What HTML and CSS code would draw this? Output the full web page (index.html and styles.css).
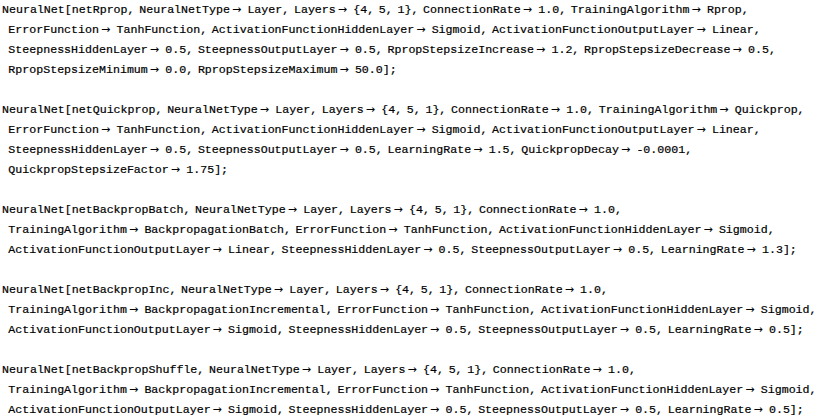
FILE: index.html
```html
<!DOCTYPE html>
<html lang="en">
<head>
<meta charset="utf-8">
<title>NeuralNet definitions</title>
<link rel="stylesheet" href="styles.css">
</head>
<body>
<main class="code">
  <div class="stmt">
    <div class="line">NeuralNet[netRprop, NeuralNetType<span class="a">→</span> Layer, Layers<span class="a">→</span> {4, 5, 1}, ConnectionRate<span class="a">→</span> 1.0, TrainingAlgorithm<span class="a">→</span> Rprop,</div>
    <div class="line cont">ErrorFunction<span class="a">→</span> TanhFunction, ActivationFunctionHiddenLayer<span class="a">→</span> Sigmoid, ActivationFunctionOutputLayer<span class="a">→</span> Linear,</div>
    <div class="line cont">SteepnessHiddenLayer<span class="a">→</span> 0.5, SteepnessOutputLayer<span class="a">→</span> 0.5, RpropStepsizeIncrease<span class="a">→</span> 1.2, RpropStepsizeDecrease<span class="a">→</span> 0.5,</div>
    <div class="line cont">RpropStepsizeMinimum<span class="a">→</span> 0.0, RpropStepsizeMaximum<span class="a">→</span> 50.0];</div>
  </div>
  <div class="stmt">
    <div class="line">NeuralNet[netQuickprop, NeuralNetType<span class="a">→</span> Layer, Layers<span class="a">→</span> {4, 5, 1}, ConnectionRate<span class="a">→</span> 1.0, TrainingAlgorithm<span class="a">→</span> Quickprop,</div>
    <div class="line cont">ErrorFunction<span class="a">→</span> TanhFunction, ActivationFunctionHiddenLayer<span class="a">→</span> Sigmoid, ActivationFunctionOutputLayer<span class="a">→</span> Linear,</div>
    <div class="line cont">SteepnessHiddenLayer<span class="a">→</span> 0.5, SteepnessOutputLayer<span class="a">→</span> 0.5, LearningRate<span class="a">→</span> 1.5, QuickpropDecay<span class="a">→</span> -0.0001,</div>
    <div class="line cont">QuickpropStepsizeFactor<span class="a">→</span> 1.75];</div>
  </div>
  <div class="stmt">
    <div class="line">NeuralNet[netBackpropBatch, NeuralNetType<span class="a">→</span> Layer, Layers<span class="a">→</span> {4, 5, 1}, ConnectionRate<span class="a">→</span> 1.0,</div>
    <div class="line cont">TrainingAlgorithm<span class="a">→</span> BackpropagationBatch, ErrorFunction<span class="a">→</span> TanhFunction, ActivationFunctionHiddenLayer<span class="a">→</span> Sigmoid,</div>
    <div class="line cont">ActivationFunctionOutputLayer<span class="a">→</span> Linear, SteepnessHiddenLayer<span class="a">→</span> 0.5, SteepnessOutputLayer<span class="a">→</span> 0.5, LearningRate<span class="a">→</span> 1.3];</div>
  </div>
  <div class="stmt">
    <div class="line">NeuralNet[netBackpropInc, NeuralNetType<span class="a">→</span> Layer, Layers<span class="a">→</span> {4, 5, 1}, ConnectionRate<span class="a">→</span> 1.0,</div>
    <div class="line cont">TrainingAlgorithm<span class="a">→</span> BackpropagationIncremental, ErrorFunction<span class="a">→</span> TanhFunction, ActivationFunctionHiddenLayer<span class="a">→</span> Sigmoid,</div>
    <div class="line cont">ActivationFunctionOutputLayer<span class="a">→</span> Sigmoid, SteepnessHiddenLayer<span class="a">→</span> 0.5, SteepnessOutputLayer<span class="a">→</span> 0.5, LearningRate<span class="a">→</span> 0.5];</div>
  </div>
  <div class="stmt">
    <div class="line">NeuralNet[netBackpropShuffle, NeuralNetType<span class="a">→</span> Layer, Layers<span class="a">→</span> {4, 5, 1}, ConnectionRate<span class="a">→</span> 1.0,</div>
    <div class="line cont">TrainingAlgorithm<span class="a">→</span> BackpropagationIncremental, ErrorFunction<span class="a">→</span> TanhFunction, ActivationFunctionHiddenLayer<span class="a">→</span> Sigmoid,</div>
    <div class="line cont">ActivationFunctionOutputLayer<span class="a">→</span> Sigmoid, SteepnessHiddenLayer<span class="a">→</span> 0.5, SteepnessOutputLayer<span class="a">→</span> 0.5, LearningRate<span class="a">→</span> 0.5];</div>
  </div>
</main>
</body>
</html>
```

FILE: styles.css
```css
html, body {
  margin: 0;
  padding: 0;
  background: #ffffff;
}

.code {
  font-family: "Liberation Mono", "DejaVu Sans Mono", monospace;
  font-size: 11.63px;
  line-height: 20px;
  color: #000000;
  word-spacing: -2.3px;
  -webkit-text-stroke: 0.2px #000000;
}

.stmt + .stmt {
  margin-top: 20px;
}

.line {
  white-space: pre;
  padding-left: 2px;
}

.line.cont {
  padding-left: 8.3px;
}

.a {
  display: inline-block;
  width: 12.8px;
  padding-left: 2px;
  box-sizing: border-box;
  word-spacing: 0;
  font-family: "DejaVu Sans", sans-serif;
  font-size: 11px;
  line-height: 1;
  -webkit-text-stroke: 0;
}
```
